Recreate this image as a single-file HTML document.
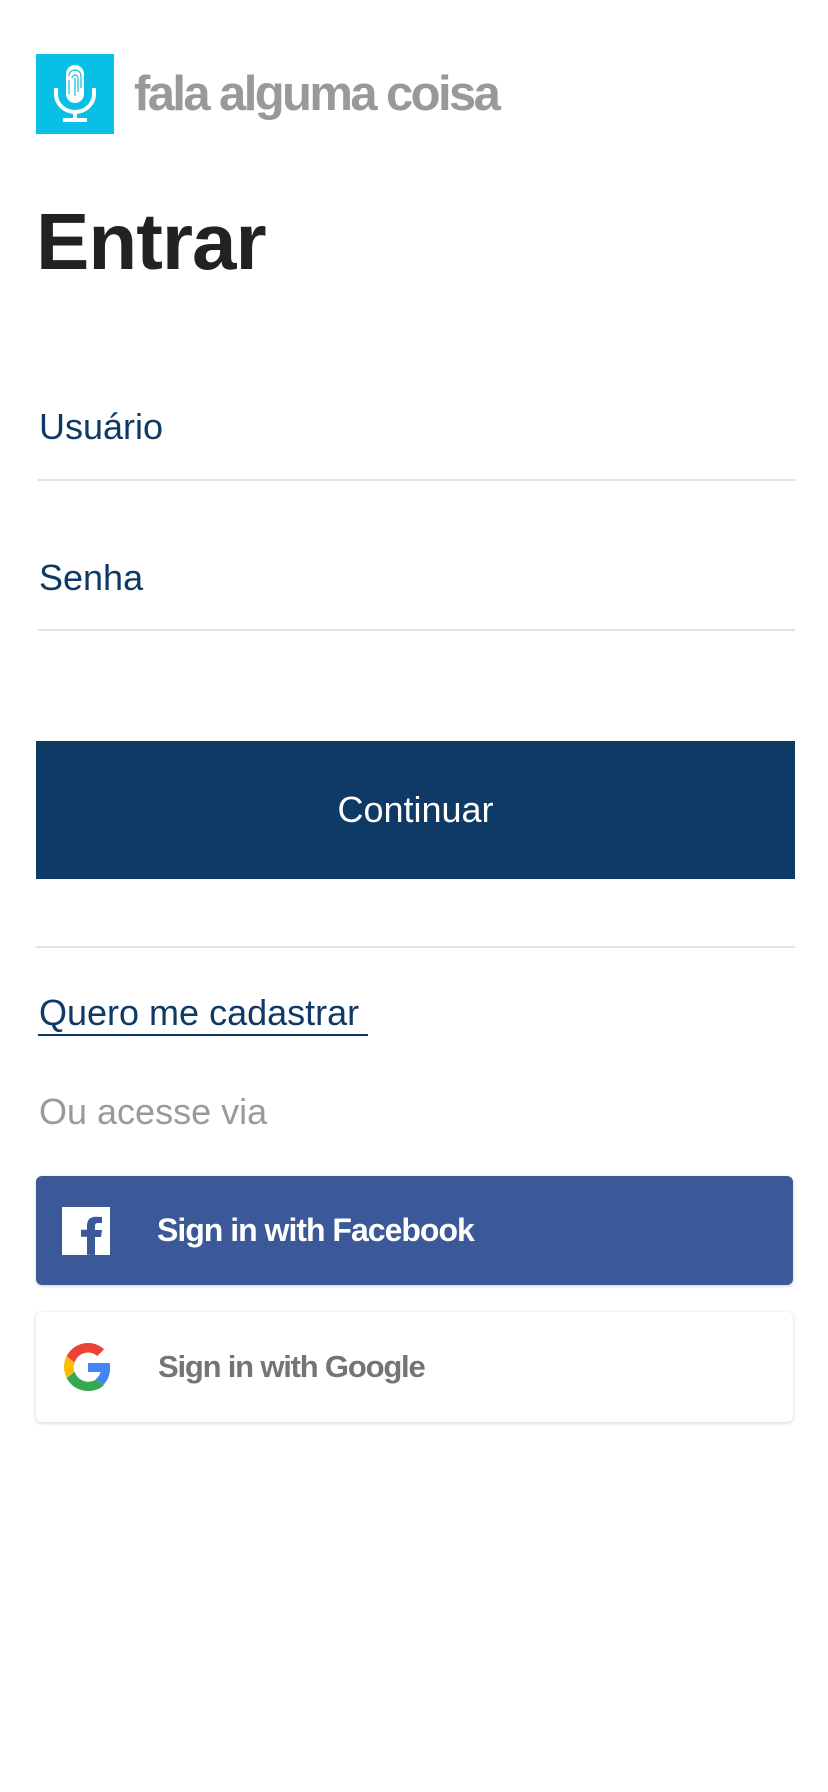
<!DOCTYPE html>
<html><head><meta charset="utf-8"><style>
*{margin:0;padding:0;box-sizing:border-box}
body{width:828px;height:1792px;background:#fff;font-family:"Liberation Sans",sans-serif;position:relative;overflow:hidden}
.a{position:absolute;white-space:nowrap}
.line{position:absolute;left:38px;width:753px;height:2px;background:#e2e2e2}
</style></head><body>
<div class="a" style="left:36px;top:54px;width:78px;height:80px;background:#08c0e6">
<svg width="78" height="80" viewBox="0 0 78 80">
<rect x="30" y="11" width="18" height="38" rx="9" fill="#fff"/>
<g fill="none" stroke="#08c0e6" stroke-width="1.2">
<path d="M33 22 a6 6 0 0 1 12 0 v12"/><path d="M36 24 a3 3 0 0 1 6 0 v14"/><path d="M39 24 v18"/><path d="M33 26 v14"/>
</g>
<path d="M20 34 v6 a19 18 0 0 0 38 0 v-6" fill="none" stroke="#fff" stroke-width="4"/>
<rect x="37" y="56" width="4" height="10" fill="#fff"/>
<rect x="27" y="64" width="24" height="4" fill="#fff"/>
</svg></div>
<div class="a" style="left:134px;top:66px;font-size:49px;font-weight:bold;color:#999;letter-spacing:-2.6px">fala alguma coisa</div>
<div class="a" style="left:36px;top:196px;font-size:80px;font-weight:bold;color:#222;letter-spacing:-1px">Entrar</div>
<div class="a" style="left:39px;top:406px;font-size:36px;color:#0f3a66">Usuário</div>
<div class="line" style="top:479px;width:757px"></div>
<div class="a" style="left:39px;top:557px;font-size:36px;color:#0f3a66">Senha</div>
<div class="line" style="top:629px;width:757px"></div>
<div class="a" style="left:36px;top:741px;width:759px;height:138px;background:#0f3a66;color:#fff;font-size:36px;text-align:center;line-height:138px">Continuar</div>
<div class="line" style="top:946px;left:36px;width:759px"></div>
<div class="a" style="left:39px;top:992px;font-size:36px;color:#0f3a66">Quero me cadastrar</div>
<div class="a" style="left:38px;top:1034px;width:330px;height:2px;background:#0f3a66"></div>
<div class="a" style="left:39px;top:1091px;font-size:36px;color:#9a9a9a;font-weight:300">Ou acesse via</div>
<div class="a" style="left:36px;top:1176px;width:757px;height:109px;background:#3b5998;border-radius:6px;box-shadow:0 1px 3px rgba(0,0,0,.2)">
<svg class="a" style="left:26px;top:31px" width="48" height="48" viewBox="0 0 48 48"><rect width="48" height="48" fill="#fff"/><path d="M33 48 V30 h6 l1 -7 h-7 v-4 c0-2 1-3 3-3 h4 v-6 c-2 0-4-0.3-6-0.3 c-6 0-9 3-9 9 v4 h-6 v7 h6 v18z" fill="#3b5998"/></svg>
<div class="a" style="left:121px;top:36px;font-size:32px;font-weight:bold;color:#fff;letter-spacing:-1px">Sign in with Facebook</div>
</div>
<div class="a" style="left:36px;top:1312px;width:757px;height:110px;background:#fff;border-radius:6px;box-shadow:0 1px 4px rgba(0,0,0,.18)">
<svg class="a" style="left:28px;top:31px" width="48" height="48" viewBox="0 0 48 48">
<path fill="#EA4335" d="M24 9.5c3.5 0 6.7 1.2 9.2 3.6l6.9-6.9C35.9 2.4 30.5 0 24 0 14.6 0 6.6 5.4 2.6 13.3l8 6.2C12.5 13.700 17.8 9.5 24 9.5z"/>
<path fill="#4285F4" d="M46.1 24.5c0-1.6-.1-3.1-.4-4.5H24v9h12.4c-.5 2.9-2.2 5.3-4.6 7l7.5 5.8c4.4-4 6.8-10 6.8-17.3z"/>
<path fill="#FBBC05" d="M10.5 28.6c-.5-1.4-.8-3-.8-4.6s.3-3.2.8-4.6l-8-6.2C.9 16.5 0 20.1 0 24s.9 7.5 2.6 10.8l7.9-6.2z"/>
<path fill="#34A853" d="M24 48c6.5 0 11.9-2.1 15.9-5.8l-7.5-5.8c-2.2 1.5-5 2.300-8.4 2.3-6.2 0-11.5-4.2-13.4-9.9l-8 6.2C6.6 42.6 14.6 48 24 48z"/>
</svg>
<div class="a" style="left:122px;top:37px;font-size:31px;font-weight:bold;color:#757575;letter-spacing:-1.2px">Sign in with Google</div>
</div>
</body></html>
